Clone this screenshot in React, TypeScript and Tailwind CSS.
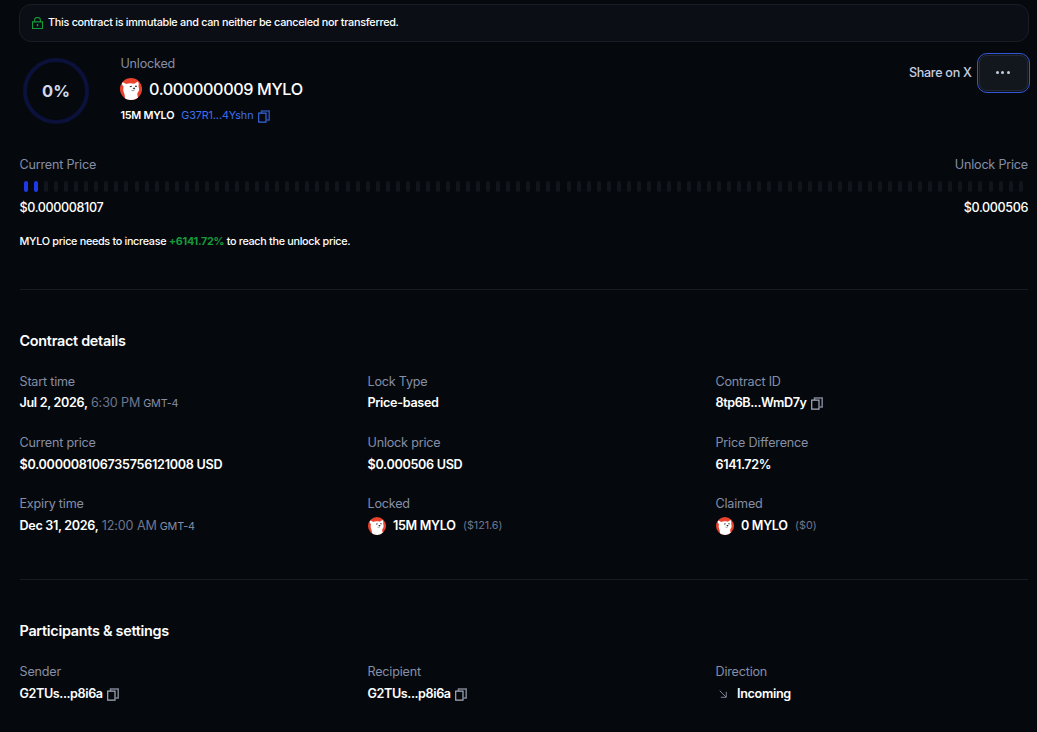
import type { ReactNode } from 'react';

const LABEL = 'h-5 text-[12.6px] leading-5 tracking-[-0.2px] text-[#858ea6]';

const CopyIcon = ({ className = '' }: { className?: string }) => (
  <svg className={`h-[13px] w-3 shrink-0 ${className}`} viewBox="0 0 12 13" fill="none" stroke="currentColor">
    <path d="M3.5 3V1h7.7v9H8.7" strokeWidth="1.5" strokeOpacity="0.75" />
    <path d="M0.7 3.2h7.3v9H0.7z" strokeWidth="1.2" />
  </svg>
);

const LockIcon = () => (
  <svg className="h-3 w-[11px] shrink-0 text-[#169b3c]" viewBox="0 0 11 12" fill="none" stroke="currentColor" strokeWidth="1.1">
    <path d="M0.5 4.9h10v6.6h-10z" />
    <path d="M2.6 4.9V3a2.9 2.6 0 0 1 5.8 0v1.9" />
    <path d="M5.5 7v2.3" strokeWidth="1.4" />
  </svg>
);

const TokenLogo = ({ className }: { className: string }) => (
  <svg className={`shrink-0 rounded-full ${className}`} viewBox="0 0 22 22">
    <rect width="22" height="22" fill="#e9432d" />
    <path
      d="M2 4.5C3.4 4.3 5 5 6.2 6c2.5-1 5.3-1 8-.3L18 3.6c.8 1.6.9 3.2.5 4.8.7 1.900.8 3.800-.2 5.400-.9 1.200-1.200 2-.9 3.300L18.500 22H4.600c.5-2.800.4-4.700-.5-6.700-1-2.600-1-4.600-.5-6.600C2.400 7.500 1.800 6 2 4.500z"
      fill="#fff"
    />
    <path d="M9.8 8.7l2-.4M15 8.2l1.8.2" stroke="#222" strokeWidth="1.1" />
    <path d="M12.6 10c.7-.5 2.200-.5 2.800 0l-1.300 1.500z" fill="#222" />
    <path d="M11.5 12.2c1 .7 2.300.5 3-.4" stroke="#555" strokeWidth=".7" fill="none" />
  </svg>
);

const Field = ({ label, children }: { label: string; children: ReactNode }) => (
  <div className="h-[61px]">
    <p className={LABEL}>{label}</p>
    <div className="mt-px flex h-[22px] items-center text-[12.6px] font-semibold tracking-[-0.32px] text-white">{children}</div>
  </div>
);

const DateValue = ({ date, time }: { date: string; time: string }) => (
  <p>
    {date}, <span className="ml-[0.7px] font-normal tracking-[-0.1px] text-[#6d7690]">{time}</span>{' '}
    <span className="text-[10.8px] font-normal tracking-[-0.13px] text-[#858ea6]">GMT-4</span>
  </p>
);

const Address = ({ value }: { value: string }) => (
  <>
    <span className="tracking-[-0.4px]">{value}</span>
    <CopyIcon className="ml-1 text-[#a5acbd]" />
  </>
);

const TokenAmount = ({ amount, usd }: { amount: string; usd: string }) => (
  <>
    <TokenLogo className="size-[18px]" />
    <span className="ml-[7.5px]">{amount}</span>
    <span className="ml-[7.5px] text-[10.8px] font-normal tracking-[-0.05px] text-[#6d7690]">({usd})</span>
  </>
);

const segments = Array.from({ length: 100 }, (_, i) => i);

const App = () => {
  return (
    <main className="h-[732px] w-[1037px] overflow-hidden bg-[#05090d] pt-1 pr-2 pl-[19px] font-['Inter',sans-serif] text-white">
      <div className="flex h-[38px] items-center rounded-xl border border-[#1a1d24] bg-[#0b0e15] pl-[11.5px]">
        <LockIcon />
        <p className="mt-px ml-[5.5px] text-[10.8px] font-medium tracking-[-0.265px]">
          This contract is immutable and can neither be canceled nor transferred.
        </p>
      </div>

      <header className="flex h-[106px] pt-[11px]">
        <div className="mt-[5px] ml-1 flex size-[66px] items-center justify-center rounded-full border-4 border-[#0b113b] text-[16.5px] font-bold text-[#d3d7ea]">
          0%
        </div>
        <div className="ml-[31.4px]">
          <p className={`pt-px ${LABEL}`}>Unlocked</p>
          <div className="flex h-8 items-center">
            <TokenLogo className="-ml-[0.4px] size-[22px]" />
            <span className="mt-px ml-[7px] text-[16.2px] font-medium tracking-[-0.38px]">0.000000009 MYLO</span>
          </div>
          <div className="flex h-5 items-center text-[10.8px]">
            <span className="mt-0.5 font-semibold tracking-[-0.25px]">15M MYLO</span>
            <span className="mt-0.5 ml-[7px] tracking-[-0.1px] text-[#3f6ff0]">G37R1...4Yshn</span>
            <CopyIcon className="mt-0.5 ml-[4.3px] text-[#3866df]" />
          </div>
        </div>
        <div className="ml-auto flex h-10 items-center">
          <span className="mr-[5.5px] text-[12.6px] font-medium tracking-[-0.3px] text-[#c4cde0]">Share on X</span>
          <button className="-mr-px flex h-10 w-[53px] items-center justify-center rounded-[10px] border border-[#3157d6] bg-[#10131a] p-px">
            <span className="flex h-full w-full items-center justify-center gap-[2.5px] rounded-lg border border-[#232833] bg-[#12161d] pr-0.5 pb-px">
              <i className="size-[3px] rounded-full bg-[#c4cde0]" />
              <i className="size-[3px] rounded-full bg-[#c4cde0]" />
              <i className="size-[3px] rounded-full bg-[#c4cde0]" />
            </span>
          </button>
        </div>
      </header>

      <section className="mr-px ml-[0.5px] h-[142px] border-b border-[#171a20] pt-[7px]">
        <div className="flex justify-between">
          <p className={LABEL}>Current Price</p>
          <p className={LABEL}>Unlock Price</p>
        </div>
        <div className="mt-[6px] flex h-[11px] justify-between pr-[5px] pl-[4.5px]">
          {segments.map((i) => (
            <span key={i} className={`h-full w-1 rounded-[2px] ${i < 2 ? 'bg-[#2039e8]' : 'bg-[#11151c]'}`} />
          ))}
        </div>
        <div className="mt-[6px] flex h-5 items-center justify-between text-[12.6px] font-medium tracking-[-0.38px]">
          <span>$0.000008107</span>
          <span>$0.000506</span>
        </div>
        <p className="mt-[14px] h-5 text-[10.8px] leading-5 font-medium tracking-[-0.3px]">
          MYLO price needs to increase <span className="font-bold text-[#169b3c]">+6141.72%</span> to reach the unlock price.
        </p>
      </section>

      <section className="mr-px ml-[0.5px] h-[290px] border-b border-[#171a20] pt-[41px]">
        <h2 className="h-5 text-[14.4px] leading-5 font-semibold tracking-[-0.28px]">Contract details</h2>
        <div className="mt-[20.6px] grid grid-cols-[348px_348px_1fr] grid-rows-[61.4px_61px_61px]">
          <Field label="Start time">
            <DateValue date="Jul 2, 2026" time="6:30 PM" />
          </Field>
          <Field label="Lock Type">Price-based</Field>
          <Field label="Contract ID">
            <Address value="8tp6B...WmD7y" />
          </Field>
          <Field label="Current price">
            <span className="tracking-[-0.26px]">$0.000008106735756121008 USD</span>
          </Field>
          <Field label="Unlock price">
            <span className="tracking-[-0.3px]">$0.000506 USD</span>
          </Field>
          <Field label="Price Difference">6141.72%</Field>
          <Field label="Expiry time">
            <DateValue date="Dec 31, 2026" time="12:00 AM" />
          </Field>
          <Field label="Locked">
            <TokenAmount amount="15M MYLO" usd="$121.6" />
          </Field>
          <Field label="Claimed">
            <TokenAmount amount="0 MYLO" usd="$0" />
          </Field>
        </div>
      </section>

      <section className="mr-px ml-[0.5px] pt-[41px]">
        <h2 className="h-5 text-[14.4px] leading-5 font-semibold tracking-[-0.28px]">Participants &amp; settings</h2>
        <div className="mt-[21px] grid grid-cols-[348px_348px_1fr]">
          <Field label="Sender">
            <Address value="G2TUs...p8i6a" />
          </Field>
          <Field label="Recipient">
            <Address value="G2TUs...p8i6a" />
          </Field>
          <Field label="Direction">
            <svg className="ml-[3.5px] size-[8px]" viewBox="0 0 8 8" fill="none" stroke="#7a8298">
              <path d="M0.7 0.7l6.3 6.3M7.3 1.8v5.5H1.8" />
            </svg>
            <span className="ml-[10px]">Incoming</span>
          </Field>
        </div>
      </section>
    </main>
  );
};

export default App;
